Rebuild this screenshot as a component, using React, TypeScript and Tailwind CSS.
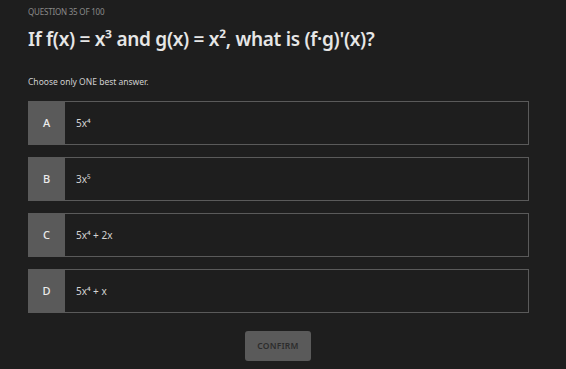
import React, { useState } from "react";

const OPTIONS = [
  { key: "A", body: "5x⁴" },
  { key: "B", body: "3x⁵" },
  { key: "C", body: "5x⁴ + 2x" },
  { key: "D", body: "5x⁴ + x" },
];

export default function App() {
  const [selected, setSelected] = useState<string | null>(null);

  return (
    <div
      className="w-[566px] h-[369px] bg-[#1e1e1e] px-7 pt-[7px] overflow-hidden"
      style={{ fontFamily: '"Noto Sans", "Open Sans", sans-serif' }}
    >
      <div className="text-[8px] leading-[10px] text-[#8a8a8a] tracking-tight">
        QUESTION 35 OF 100
      </div>
      <h1 className="mt-[9px] text-[19px] leading-[26px] font-semibold text-[#e6e6e6] tracking-[-0.3px]">
        If f(x) = x³ and g(x) = x², what is (f·g)'(x)?
      </h1>
      <p className="mt-[24px] text-[8.5px] leading-[12px] text-[#d0d0d0]">
        Choose only ONE best answer.
      </p>

      <div className="mt-[13px] flex flex-col gap-3 w-[501px]">
        {OPTIONS.map((o) => (
          <button
            key={o.key}
            onClick={() => setSelected(o.key)}
            className={
              "flex h-11 text-left border " +
              (selected === o.key ? "border-[#9a9a9a]" : "border-[#5a5a5a]")
            }
          >
            <div className="w-[37px] -my-px -ml-px bg-[#5a5a5a] flex items-center justify-center text-[11px] font-medium text-[#ececec]">
              {o.key}
            </div>
            <div className="flex-1 flex items-center pl-[11px] text-[10px] text-[#d4d4d4]">
              {o.body}
            </div>
          </button>
        ))}
      </div>

      <div className="flex justify-center mt-[18px] pr-[10px]">
        <button className="w-[66px] h-[30px] rounded-[3px] bg-[#5a5a5a] text-[8.5px] font-semibold tracking-wide text-[#2c2c2c]">
          CONFIRM
        </button>
      </div>
    </div>
  );
}
